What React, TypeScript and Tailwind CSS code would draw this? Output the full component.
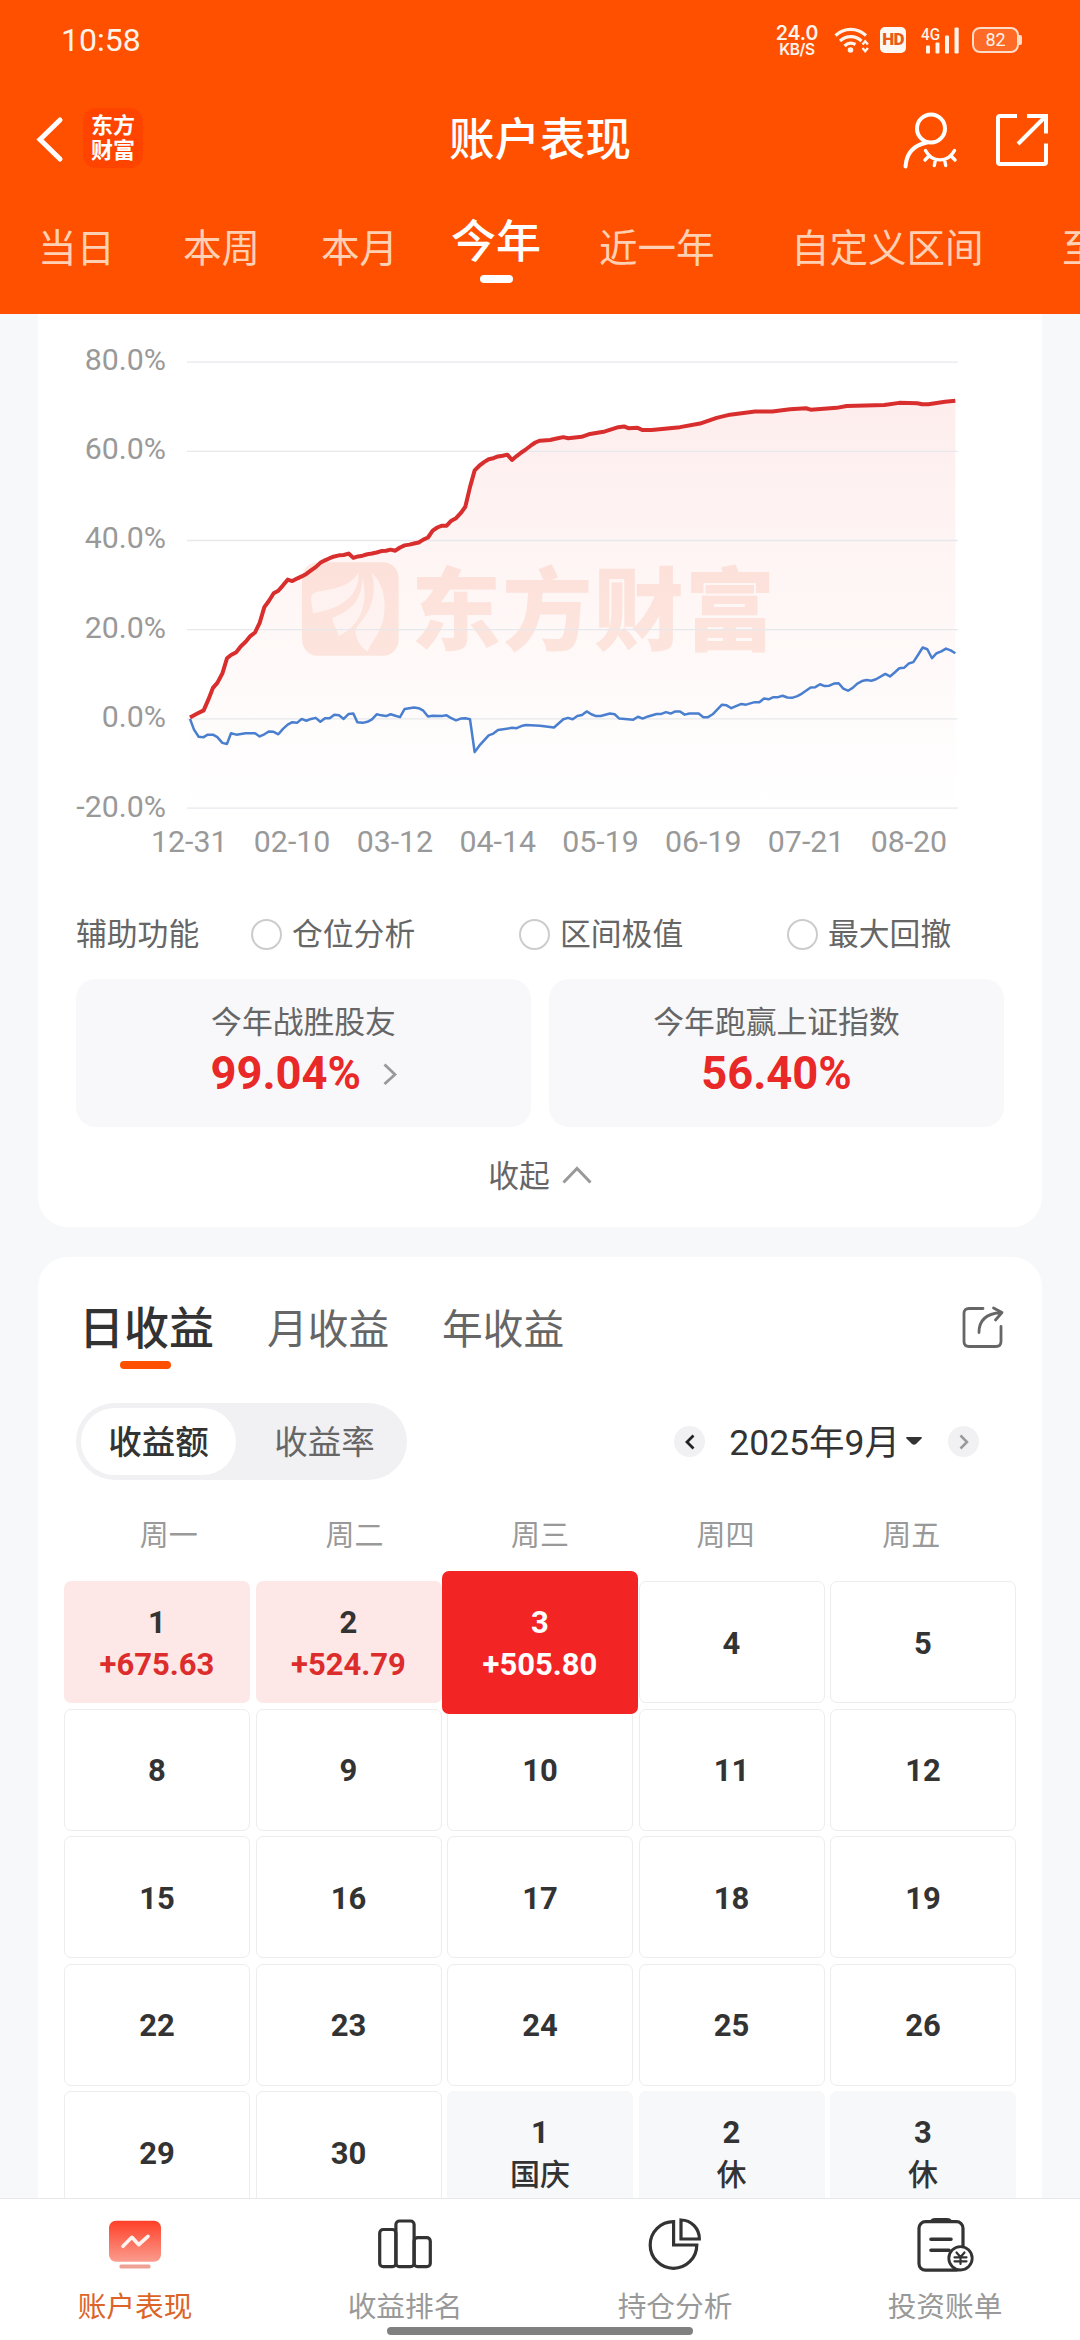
import clsx from 'clsx';

type Day = { day: string; note?: string; kind?: 'gain' | 'selected' | 'holiday' };

const ranges = [
  { label: '当日', width: 'w-[145px]' },
  { label: '本周', width: 'w-[138px]' },
  { label: '本月', width: 'w-[130px]' },
  { label: '今年', width: 'w-[148px]', active: true },
  { label: '近一年', width: 'w-[192px]' },
  { label: '自定义区间', width: 'w-[271px]' },
  { label: '至今', width: 'w-[80px]' },
];

const weekdays = ['周一', '周二', '周三', '周四', '周五'];

const days: Day[] = [
  { day: '1', note: '+675.63', kind: 'gain' },
  { day: '2', note: '+524.79', kind: 'gain' },
  { day: '3', note: '+505.80', kind: 'selected' },
  { day: '4' },
  { day: '5' },
  ...['8', '9', '10', '11', '12', '15', '16', '17', '18', '19', '22', '23', '24', '25', '26', '29', '30'].map(
    (day) => ({ day }),
  ),
  { day: '1', note: '国庆', kind: 'holiday' },
  { day: '2', note: '休', kind: 'holiday' },
  { day: '3', note: '休', kind: 'holiday' },
];

const yLabels = ['80.0%', '60.0%', '40.0%', '20.0%', '0.0%', '-20.0%'];
const xLabels = ['12-31', '02-10', '03-12', '04-14', '05-19', '06-19', '07-21', '08-20'];

const accountLine =
  '390,1113 412,1102 431,1093 445,1063 459,1030 472,1016 487,990 501,947 513,938 529,930 542,914 557,901 571,885 585,875 599,848 613,804 627,786 641,765 655,758 669,743 683,727 697,731 711,724 725,718 739,711 753,701 767,692 781,680 795,673 809,667 823,662 837,659 851,658 866,654 880,666 894,662 908,660 922,656 936,654 950,651 964,647 978,646 992,643 1006,646 1020,637 1034,631 1048,629 1062,626 1076,623 1090,615 1104,609 1118,590 1132,581 1146,576 1160,576 1174,562 1188,555 1202,541 1216,523 1230,468 1244,421 1258,408 1272,398 1286,390 1300,387 1314,382 1328,380 1342,377 1356,392 1370,381 1384,371 1398,362 1412,352 1426,343 1440,338 1470,336 1490,332 1510,328 1525,331 1565,327 1590,319 1635,312 1675,300 1692,298 1705,303 1733,302 1747,308 1775,308 1860,300 1920,290 1970,274 2010,265 2085,256 2137,256 2190,250 2238,247 2252,251 2330,246 2360,241 2473,238 2518,232 2572,233 2586,236 2605,236 2655,229 2686,226';

const indexLine =
  '390,1117 402,1147 416,1167 431,1168 443,1161 459,1161 472,1168 487,1184 501,1187 513,1157 529,1161 557,1157 585,1157 599,1166 613,1160 627,1152 641,1153 655,1160 669,1145 683,1133 697,1126 711,1128 725,1117 739,1122 753,1117 767,1114 781,1125 795,1115 809,1115 823,1105 837,1107 851,1117 866,1103 880,1102 892,1126 908,1128 922,1125 936,1118 950,1104 964,1107 978,1109 992,1104 1006,1108 1020,1112 1034,1089 1062,1085 1076,1087 1090,1094 1104,1110 1118,1108 1146,1109 1160,1107 1174,1115 1188,1121 1202,1116 1216,1115 1230,1118 1244,1210 1258,1192 1286,1163 1300,1158 1314,1148 1356,1142 1370,1143 1384,1137 1398,1134 1440,1136 1482,1141 1510,1118 1524,1114 1538,1118 1552,1109 1566,1106 1580,1096 1594,1104 1608,1109 1622,1109 1650,1102 1664,1104 1678,1116 1720,1119 1734,1111 1748,1116 1764,1110 1790,1103 1804,1103 1818,1098 1832,1102 1846,1096 1860,1096 1874,1105 1888,1102 1916,1102 1930,1112 1944,1112 1958,1104 1986,1077 2000,1079 2014,1087 2028,1081 2044,1075 2058,1077 2084,1070 2098,1070 2112,1060 2126,1062 2140,1056 2154,1056 2168,1052 2182,1057 2196,1058 2212,1053 2226,1046 2252,1029 2266,1028 2280,1020 2294,1025 2308,1024 2322,1018 2336,1017 2350,1032 2364,1038 2378,1030 2392,1018 2406,1011 2420,1008 2434,1010 2448,1006 2476,991 2490,998 2504,987 2518,975 2532,974 2546,962 2560,958 2574,938 2588,917 2602,922 2616,947 2630,933 2644,928 2658,920 2672,925 2686,933';

function StatusBar() {
  return (
    <div className="flex h-[80px] items-center pr-[58px] pl-[61px] text-[#fff3ea]">
      <span className="text-[32px] leading-[40px]">10:58</span>
      <div className="ml-auto flex items-center">
        <div className="mr-[14px] w-[46px] text-center font-[Inter] font-semibold">
          <div className="text-[19.500px] leading-[18px]">24.0</div>
          <div className="text-[15.500px] leading-[15px] tracking-[-0.4px]">KB/S</div>
        </div>
        <svg className="h-[28px] w-[36px]" viewBox="0 0 36 28" fill="none" stroke="currentColor" strokeWidth="3.200">
          <path d="M1.500 9.500A22 22 0 0 1 32 9.500M6 15A15.500 15.500 0 0 1 27.500 15M10.500 20A9.500 9.500 0 0 1 21.500 18.500" />
          <circle cx="16.500" cy="24" r="2.800" fill="currentColor" stroke="none" />
          <path d="M28.500 18.500l2.700-3.200 2.700 3.200M28.500 22l2.700 3.200 2.700-3.200" strokeWidth="2.400" />
        </svg>
        <div className="ml-[10px] flex h-[26px] w-[26px] items-center justify-center rounded-[5px] bg-[#fff8f2] text-[17px] font-black tracking-[-0.8px] text-[#e85a1a]">
          HD
        </div>
        <svg className="mb-[5px] ml-[15px] h-[32px] w-[38px]" viewBox="0 -5 38 32" fill="currentColor">
          <text x="0" y="13" fontSize="17" fontWeight="500" textLength="19" lengthAdjust="spacingAndGlyphs">
            4G
          </text>
          <rect x="5" y="18.500" width="4" height="8" rx="1" />
          <rect x="14.500" y="15.500" width="4" height="11" rx="1" />
          <rect x="24" y="8.500" width="4" height="18" rx="1" />
          <rect x="33.500" y="0.500" width="4.200" height="26" rx="1" />
        </svg>
        <div className="ml-[13px] flex h-[26px] w-[47px] items-center justify-center rounded-[8px] border-[2.500px] border-[#ffdcc8] bg-[#ff6a26] text-[18px] leading-none">
          82
        </div>
        <div className="h-[10px] w-[3px] rounded-r-[2px] bg-[#ffdcc8]" />
      </div>
    </div>
  );
}

function Header() {
  return (
    <header className="h-[314px] shrink-0 overflow-hidden bg-[#ff5000] text-white">
      <StatusBar />
      <div className="flex h-[120px] items-center pr-[31px] pl-[35px]">
        <svg className="h-[50px] w-[30px]" viewBox="0 0 30 50" fill="none" stroke="currentColor" strokeWidth="5">
          <path d="M25 5L5 24.500 25 44" strokeLinecap="round" />
        </svg>
        <div className="mt-[-4px] ml-[18px] flex h-[60px] w-[60px] flex-col items-center justify-center rounded-[13px] bg-[#ff4400] text-[22px] leading-[25px] font-bold">
          <span>东方</span>
          <span>财富</span>
        </div>
        <h1 className="flex-1 pt-[2px] pl-[37px] text-center text-[45.500px] leading-[60px] font-medium">账户表现</h1>
        <svg className="h-[60px] w-[60px]" viewBox="0 0 60 60" fill="none" stroke="currentColor" strokeWidth="4">
          <circle cx="31" cy="18.500" r="14" />
          <path d="M27 32.500C14 35 6.500 43 5.500 56.500" strokeLinecap="round" />
          <path
            d="M25.500 40.500C32 53 48 53 54.500 40.500M29 46l-4 4M35.500 49.500l-1.200 6M44.500 49.500l1.200 6M51 46l4 4"
            strokeWidth="3.400"
            strokeLinecap="round"
          />
        </svg>
        <svg className="ml-[35px] h-[54px] w-[54px]" viewBox="0 0 54 54" fill="none" stroke="currentColor" strokeWidth="4">
          <path d="M22 3H5Q3 3 3 5V49Q3 51 5 51H49Q51 51 51 49V30.500M32 3H51V20.500M50 4L23 31" />
        </svg>
      </div>
      <nav className="flex h-[114px] pl-[38px]">
        {ranges.map((range) => (
          <div key={range.label} className={clsx('shrink-0 whitespace-nowrap', range.width)}>
            {range.active ? (
              <div className="flex w-[90px] flex-col items-center pt-[13px]">
                <span className="text-[45px] leading-[60px] font-medium">{range.label}</span>
                <span className="mt-[2px] h-[8px] w-[33px] rounded-full bg-white" />
              </div>
            ) : (
              <div className="pt-[19px] text-[38.500px] leading-[60px] text-[#ffd0b4]">{range.label}</div>
            )}
          </div>
        ))}
      </nav>
    </header>
  );
}

function PerformanceChart() {
  return (
    <svg className="h-[580px] w-[1004px] shrink-0" viewBox="38 314 1004 580" fontSize="30.300" fill="#999999">
      <defs>
        <linearGradient id="account-fill" x1="0" y1="0" x2="0" y2="1">
          <stop offset="0" stopColor="#f03a3a" stopOpacity="0.09" />
          <stop offset="0.500" stopColor="#f04a3a" stopOpacity="0.045" />
          <stop offset="1" stopColor="#f04a3a" stopOpacity="0" />
        </linearGradient>
      </defs>
      <g transform="translate(60 320) scale(0.33333 0.35714)">
        <rect x="726" y="678" width="290" height="262" rx="46" fill="#fdeae3" />
        <g fill="#fffaf9">
          <path d="M895 706C876 742 830 752 775 760Q752 763 753 782L759 821C850 806 900 770 895 706Z" />
          <path d="M908 722C904 790 870 815 818 834C814 850 832 862 836 885C900 856 926 800 908 722Z" />
          <path d="M935 708C962 800 898 846 886 868C888 896 902 916 923 928C938 892 975 870 974 796C972 752 956 726 935 708Z" />
        </g>
      </g>
      <text x="411" y="643" fontSize="90" fontWeight="900" textLength="364" fill="#fdeae3">
        东方财富
      </text>
      <g transform="translate(60 320) scale(0.33333 0.35714)">
        <polygon points={`${accountLine} 2686,1367 390,1367`} fill="url(#account-fill)" />
      </g>
      {yLabels.map((label, i) => (
        <g key={label}>
          <line x1="187" x2="957.700" y1={362.1 + i * 89.2} y2={362.1 + i * 89.2} stroke="#e6e8ec" strokeWidth="1.300" />
          <text x="166" y={369.5 + i * 89.4} textAnchor="end">
            {label}
          </text>
        </g>
      ))}
      {xLabels.map((label, i) => (
        <text key={label} x={189.3 + i * 102.8} y="852" textAnchor="middle">
          {label}
        </text>
      ))}
      <g transform="translate(60 320) scale(0.33333 0.35714)" fill="none" strokeLinejoin="round">
        <polyline points={indexLine} stroke="#4a7fd0" strokeWidth="2.500" vectorEffect="non-scaling-stroke" />
        <polyline points={accountLine} stroke="#d82e2e" strokeWidth="4" vectorEffect="non-scaling-stroke" />
      </g>
    </svg>
  );
}

function Option({ label }: { label: string }) {
  return (
    <div className="flex w-[268px] shrink-0 items-center gap-[10px] last:w-auto">
      <span className="h-[31px] w-[31px] rounded-full border-[2.500px] border-[#cccccc]" />
      <span className="pt-[2px]">{label}</span>
    </div>
  );
}

function SummaryCard() {
  return (
    <section className="mx-[38px] flex h-[913px] shrink-0 flex-col rounded-b-[30px] bg-white text-[30.800px] text-[#666666]">
      <PerformanceChart />
      <div className="flex h-[80px] items-center pl-[38px]">
        <span className="w-[175px] shrink-0 pt-[2px]">辅助功能</span>
        <Option label="仓位分析" />
        <Option label="区间极值" />
        <Option label="最大回撤" />
      </div>
      <div className="mx-[38px] mt-[5px] grid h-[148px] shrink-0 grid-cols-2 gap-[18px]">
        <div className="flex flex-col items-center rounded-[20px] bg-[#f8f8fb] pt-[21px]">
          <span className="leading-[46px]">今年战胜股友</span>
          <div className="flex w-[186px] items-center justify-between">
            <span className="text-[45.300px] leading-[55px] font-bold text-[#e92828]">99.04%</span>
            <svg className="h-[22px] w-[14px]" viewBox="0 0 14 22" fill="none" stroke="#999999" strokeWidth="2.800">
              <path d="M1.500 1.500L12 11.500 1.500 21" />
            </svg>
          </div>
        </div>
        <div className="flex flex-col items-center rounded-[20px] bg-[#f8f8fb] pt-[21px]">
          <span className="leading-[46px]">今年跑赢上证指数</span>
          <span className="text-[45.300px] leading-[55px] font-bold text-[#e92828]">56.40%</span>
        </div>
      </div>
      <div className="flex h-[98px] items-center justify-center gap-[12px]">
        <span className="pt-[2px]">收起</span>
        <svg className="mb-[2px] h-[18px] w-[30px]" viewBox="0 0 30 18" fill="none" stroke="#999999" strokeWidth="3">
          <path d="M1.500 16.500L15 2.500 28.500 16.500" />
        </svg>
      </div>
    </section>
  );
}

function DayCell({ day, note, kind }: Day) {
  return (
    <div
      className={clsx(
        'flex flex-col items-center justify-center rounded-[7px] pt-[3px] text-[31px] leading-[42px] font-bold text-[#333333]',
        !kind && 'border border-[#ededed]',
        kind === 'gain' && 'bg-[#fde8e7]',
        kind === 'selected' && 'z-10 -mx-[5px] -my-[10.500px] bg-[#f32424] text-white',
        kind === 'holiday' && 'bg-[#f7f8fa]',
      )}
    >
      <span>{day}</span>
      {note && (
        <span className={clsx(kind === 'gain' && 'text-[#dc2c2c]', kind === 'holiday' && 'text-[30px] font-medium')}>
          {note}
        </span>
      )}
    </div>
  );
}

function CalendarCard() {
  return (
    <section className="mx-[38px] mt-[30px] h-[941px] shrink-0 overflow-hidden rounded-t-[30px] bg-white text-[#666666]">
      <div className="flex h-[146px] items-start pt-[43px] pl-[41px]">
        <div className="flex w-[188px] flex-col">
          <span className="text-[45px] leading-[60px] font-medium text-[#333333]">日收益</span>
          <span className="mt-[1px] ml-[41px] h-[8px] w-[51px] rounded-full bg-[#ff5000]" />
        </div>
        <span className="w-[175px] text-[40.700px] leading-[60px]">月收益</span>
        <span className="text-[40.700px] leading-[60px]">年收益</span>
        <svg
          className="mt-[6px] mr-[37px] ml-auto h-[44px] w-[44px]"
          viewBox="0 0 44 44"
          fill="none"
          stroke="#666666"
          strokeWidth="2.800"
          strokeLinecap="round"
          strokeLinejoin="round"
        >
          <path d="M22 2.500H8Q3 2.500 3 7.500V35.500Q3 40.500 8 40.500H35Q40 40.500 40 35.500V20.500" />
          <path d="M18 26.500C18 15 25 7.500 40 6.500M32.500 2L41 6.500 34.500 14" />
        </svg>
      </div>
      <div className="flex h-[77px] items-center pr-[63px] pl-[38px]">
        <div className="flex h-[77px] w-[331px] items-center rounded-full bg-[#f1f1f4] p-[5px] text-[33.500px]">
          <span className="flex h-[67px] w-[155px] items-center justify-center rounded-full bg-white pt-[3px] font-medium text-[#333333]">
            收益额
          </span>
          <span className="flex-1 pt-[3px] pl-[11px] text-center">收益率</span>
        </div>
        <span className="ml-auto flex h-[31px] w-[31px] items-center justify-center rounded-full bg-[#f1f1f4]">
          <svg className="h-[16px] w-[10px]" viewBox="0 0 10 16" fill="none" stroke="#222222" strokeWidth="2.800">
            <path d="M8.500 1.500L2 8 8.500 14.500" />
          </svg>
        </span>
        <span className="ml-[24px] pt-[4px] text-[35.500px] text-[#333333]">2025年9月</span>
        <svg className="mb-[2px] ml-[6px] h-[8px] w-[16px]" viewBox="0 0 16 8" fill="#333333">
          <path d="M1 0H15Q16.500 0 15.500 1.500L10 7Q8 8.500 6 7L.5 1.500Q-.5 0 1 0Z" />
        </svg>
        <span className="ml-[26px] flex h-[31px] w-[31px] items-center justify-center rounded-full bg-[#f1f1f4]">
          <svg className="h-[16px] w-[10px]" viewBox="0 0 10 16" fill="none" stroke="#999999" strokeWidth="2.500">
            <path d="M1.500 1.500L8 8 1.500 14.500" />
          </svg>
        </span>
      </div>
      <div className="mx-[38px] grid h-[101px] grid-cols-5 items-center pt-[13px] text-center text-[29px] text-[#999999]">
        {weekdays.map((weekday) => (
          <span key={weekday}>{weekday}</span>
        ))}
      </div>
      <div className="mx-[26px] grid auto-rows-[122px] grid-cols-5 gap-[5.500px]">
        {days.map((item, i) => (
          <DayCell key={i} {...item} />
        ))}
      </div>
    </section>
  );
}

function TabBar() {
  return (
    <footer className="relative h-[142px] shrink-0 border-t border-[#e8e8ea] bg-white text-[28.700px] text-[#999999]">
      <div className="grid grid-cols-4 pt-[15px]">
        <div className="flex flex-col items-center text-[#dc6428]">
          <svg className="h-[60px] w-[60px]" viewBox="0 0 60 60" fill="none">
            <defs>
              <linearGradient id="tab-active" x1="0" y1="0" x2="0" y2="1">
                <stop offset="0" stopColor="#ff3f28" />
                <stop offset="1" stopColor="#fb9c8e" />
              </linearGradient>
            </defs>
            <rect x="4" y="6.700" width="52" height="41" rx="7" fill="url(#tab-active)" />
            <rect x="14.500" y="50.500" width="31" height="4" rx="1.500" fill="#f0a196" />
            <path d="M18 32.300L26.900 23.300 33.800 30.700 43 22.300" stroke="#fff3f0" strokeWidth="3.600" strokeLinecap="round" strokeLinejoin="round" />
          </svg>
          <span className="mt-[11px] leading-[44px]">账户表现</span>
        </div>
        <div className="flex flex-col items-center">
          <svg className="h-[60px] w-[60px]" viewBox="0 0 60 60" fill="none" stroke="#333333" strokeWidth="3.200">
            <rect x="4.700" y="15.500" width="16.200" height="37.200" rx="3.500" />
            <rect x="20.900" y="7" width="18.200" height="45.700" rx="3.500" />
            <rect x="39.100" y="23.700" width="16.200" height="29" rx="3.500" />
          </svg>
          <span className="mt-[11px] leading-[44px]">收益排名</span>
        </div>
        <div className="flex flex-col items-center">
          <svg className="h-[60px] w-[60px]" viewBox="0 0 60 60" fill="none" stroke="#333333" strokeWidth="3.200">
            <path d="M28.600 7.700A23.300 23.300 0 1 0 51.800 31H28.600Z" />
            <path d="M36 6V25H54.300A18.600 18.600 0 0 0 36 6Z" />
          </svg>
          <span className="mt-[11px] leading-[44px]">持仓分析</span>
        </div>
        <div className="flex flex-col items-center">
          <svg className="h-[60px] w-[60px]" viewBox="0 0 60 60" fill="none" stroke="#333333" strokeWidth="3.200" strokeLinecap="round">
            <rect x="4" y="7.700" width="44" height="48.500" rx="6.500" />
            <path d="M15 9V7Q16 4 20 4H32Q36 4 37 7V9Z" fill="#333333" stroke="none" />
            <path d="M16 25.300H36M16 36.300H34" strokeWidth="3.600" />
            <circle cx="45.500" cy="44.300" r="11.700" fill="white" strokeWidth="2.800" />
            <path d="M41.500 38.500l4 4.500 4-4.500M39.500 43.300H51.500M39.500 47.300H51.500M45.500 43V50" strokeWidth="2.200" />
          </svg>
          <span className="mt-[11px] leading-[44px]">投资账单</span>
        </div>
      </div>
      <div className="absolute bottom-[5px] left-[387px] h-[8px] w-[306px] rounded-full bg-[#808080]" />
    </footer>
  );
}

export default function App() {
  return (
    <div className="flex h-[2340px] w-[1080px] flex-col overflow-hidden bg-[#f7f8fa] font-[Roboto,'Noto_Sans_CJK_SC',sans-serif]">
      <Header />
      <SummaryCard />
      <CalendarCard />
      <TabBar />
    </div>
  );
}
